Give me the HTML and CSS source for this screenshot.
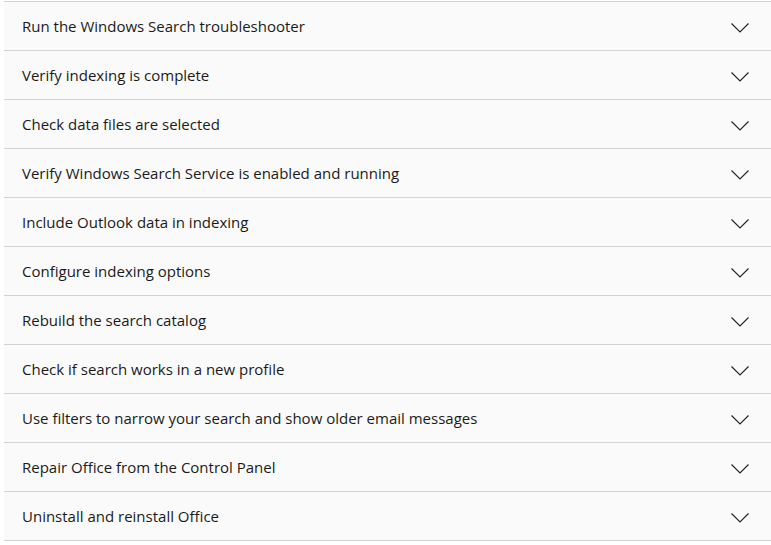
FILE: index.html
```html
<!DOCTYPE html>
<html lang="en">
<head>
  <meta charset="UTF-8">
  <title>Search troubleshooting</title>
  <link rel="stylesheet" href="styles.css">
</head>
<body>
  <div class="list">
    <div class="item"><span>Run the Windows Search troubleshooter</span><svg class="chev" viewBox="0 0 18 10"><path d="M0.5 0.5 L9 9 L17.5 0.5"/></svg></div>
    <div class="item"><span>Verify indexing is complete</span><svg class="chev" viewBox="0 0 18 10"><path d="M0.5 0.5 L9 9 L17.5 0.5"/></svg></div>
    <div class="item"><span>Check data files are selected</span><svg class="chev" viewBox="0 0 18 10"><path d="M0.5 0.5 L9 9 L17.5 0.5"/></svg></div>
    <div class="item"><span>Verify Windows Search Service is enabled and running</span><svg class="chev" viewBox="0 0 18 10"><path d="M0.5 0.5 L9 9 L17.5 0.5"/></svg></div>
    <div class="item"><span>Include Outlook data in indexing</span><svg class="chev" viewBox="0 0 18 10"><path d="M0.5 0.5 L9 9 L17.5 0.5"/></svg></div>
    <div class="item"><span>Configure indexing options</span><svg class="chev" viewBox="0 0 18 10"><path d="M0.5 0.5 L9 9 L17.5 0.5"/></svg></div>
    <div class="item"><span>Rebuild the search catalog</span><svg class="chev" viewBox="0 0 18 10"><path d="M0.5 0.5 L9 9 L17.5 0.5"/></svg></div>
    <div class="item"><span>Check if search works in a new profile</span><svg class="chev" viewBox="0 0 18 10"><path d="M0.5 0.5 L9 9 L17.5 0.5"/></svg></div>
    <div class="item"><span>Use filters to narrow your search and show older email messages</span><svg class="chev" viewBox="0 0 18 10"><path d="M0.5 0.5 L9 9 L17.5 0.5"/></svg></div>
    <div class="item"><span>Repair Office from the Control Panel</span><svg class="chev" viewBox="0 0 18 10"><path d="M0.5 0.5 L9 9 L17.5 0.5"/></svg></div>
    <div class="item"><span>Uninstall and reinstall Office</span><svg class="chev" viewBox="0 0 18 10"><path d="M0.5 0.5 L9 9 L17.5 0.5"/></svg></div>
  </div>
</body>
</html>
```

FILE: styles.css
```css
body { margin: 0; padding: 1px 0 0 4px; background: #fff; font-family: "Open Sans", sans-serif; }
.list { background: #fafafa; }
.item { display: flex; align-items: center; justify-content: space-between; height: 48px; padding: 0 22px 0 18px; border-top: 1px solid #d2d2d2; font-size: 15px; color: #1a1a1a; }
.item:last-child { border-bottom: 1px solid #d2d2d2; }
.chev { width: 18px; height: 10px; margin-top: 4px; }
.chev path { fill: none; stroke: #262626; stroke-width: 1.2; }
```
